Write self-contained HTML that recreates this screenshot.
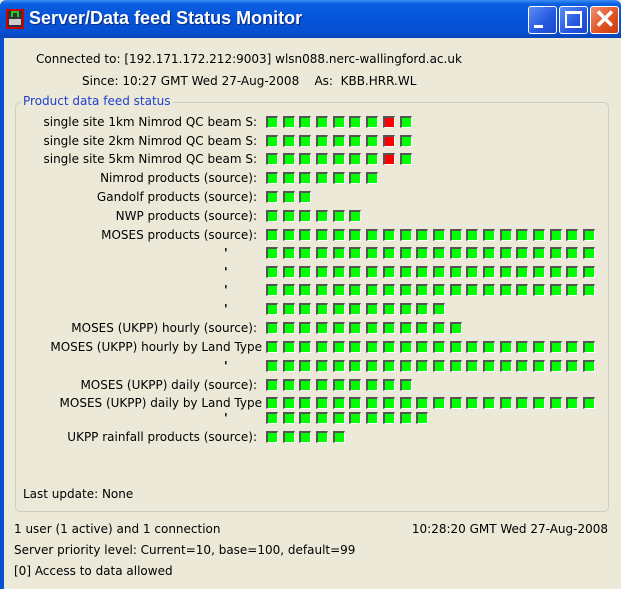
<!DOCTYPE html>
<html><head><style>
*{margin:0;padding:0;box-sizing:border-box}
body{width:621px;height:589px;overflow:hidden;background:#ece9d8;font-family:"DejaVu Sans","Liberation Sans",sans-serif;font-size:12px;color:#000;position:relative}
#tb{position:absolute;left:0;top:0;width:621px;height:38px;background:linear-gradient(#3d8ef5 0,#0a5fe0 4px,#0553d8 50%,#0650d0 85%,#0a44b8 100%);border-radius:6px 6px 0 0}
#lb{position:absolute;left:0;top:38px;width:4px;height:551px;background:#0a4fd0}
.t{position:absolute;white-space:nowrap}
.btn{position:absolute;top:6px;width:29px;height:28px;border:1px solid #fff;border-radius:3px;background:linear-gradient(135deg,#5d8ff5,#2457e0 60%,#1c48cc)}
.row{position:absolute;left:266px;height:12px;display:flex}
.row i{display:block;width:12px;height:12px;margin-right:4.7px;background:#00ff00;border-top:2px solid #555;border-left:2px solid #555;border-right:1px solid #fff;border-bottom:1px solid #fff}
.row i.r{background:#ff0000}
.lab{position:absolute;right:364px;white-space:nowrap;text-align:right}
.q{position:absolute;left:224px;font-weight:bold}
#grp{position:absolute;left:15px;top:102px;width:594px;height:410px;border:1px solid #cfcdbf;border-radius:5px}
</style></head><body>
<div id="tb"></div><div id="lb"></div>
<div style="position:absolute;left:6px;top:9px;width:18px;height:20px;background:#333;border:2px solid #c00"><div style="position:absolute;left:1px;top:8px;width:12px;height:6px;background:#ccc"></div><div style="position:absolute;left:3px;top:0;width:8px;height:6px;border:2px solid #2c2;border-bottom:none"></div></div>
<div class="t" style="left:29px;top:8px;color:#fff;font-family:'Liberation Sans',sans-serif;font-size:18px;font-weight:bold;text-shadow:1px 1px #0a2a80">Server/Data feed Status Monitor</div>
<div class="btn" style="left:528px"><div style="position:absolute;left:5px;top:18px;width:9px;height:3px;background:#fff"></div></div>
<div class="btn" style="left:559px"><div style="position:absolute;left:5px;top:4px;width:17px;height:17px;border:2px solid #fff;border-top-width:3px"></div></div>
<div class="btn" style="left:590px;background:linear-gradient(135deg,#f09070,#e05020 60%,#c83c10)"><div style="position:absolute;left:3px;top:-3px;color:#fff;font-size:26px;font-weight:bold;font-family:'Liberation Sans',sans-serif">✕</div></div>

<div class="t" style="left:36px;top:52px">Connected to: [192.171.172.212:9003] wlsn088.nerc-wallingford.ac.uk</div>
<div class="t" style="left:82px;top:74px">Since: 10:27 GMT Wed 27-Aug-2008 &nbsp;&nbsp; As: &nbsp;KBB.HRR.WL</div>
<div id="grp"></div>
<div class="t" style="left:21px;top:94px;color:#2040d0;background:#ece9d8;padding:0 2px">Product data feed status</div>

<div class="lab" style="top:115px">single site 1km Nimrod QC beam S:</div>
<div class="row" style="top:116px"><i></i><i></i><i></i><i></i><i></i><i></i><i></i><i class="r"></i><i></i></div>
<div class="lab" style="top:134px">single site 2km Nimrod QC beam S:</div>
<div class="row" style="top:135px"><i></i><i></i><i></i><i></i><i></i><i></i><i></i><i class="r"></i><i></i></div>
<div class="lab" style="top:152px">single site 5km Nimrod QC beam S:</div>
<div class="row" style="top:153px"><i></i><i></i><i></i><i></i><i></i><i></i><i></i><i class="r"></i><i></i></div>
<div class="lab" style="top:171px">Nimrod products (source):</div>
<div class="row" style="top:172px"><i></i><i></i><i></i><i></i><i></i><i></i><i></i></div>
<div class="lab" style="top:190px">Gandolf products (source):</div>
<div class="row" style="top:191px"><i></i><i></i><i></i></div>
<div class="lab" style="top:209px">NWP products (source):</div>
<div class="row" style="top:210px"><i></i><i></i><i></i><i></i><i></i><i></i></div>
<div class="lab" style="top:228px">MOSES products (source):</div>
<div class="row" style="top:229px"><i></i><i></i><i></i><i></i><i></i><i></i><i></i><i></i><i></i><i></i><i></i><i></i><i></i><i></i><i></i><i></i><i></i><i></i><i></i><i></i></div>
<div class="q" style="top:246px">'</div>
<div class="row" style="top:247px"><i></i><i></i><i></i><i></i><i></i><i></i><i></i><i></i><i></i><i></i><i></i><i></i><i></i><i></i><i></i><i></i><i></i><i></i><i></i><i></i></div>
<div class="q" style="top:265px">'</div>
<div class="row" style="top:266px"><i></i><i></i><i></i><i></i><i></i><i></i><i></i><i></i><i></i><i></i><i></i><i></i><i></i><i></i><i></i><i></i><i></i><i></i><i></i><i></i></div>
<div class="q" style="top:283px">'</div>
<div class="row" style="top:284px"><i></i><i></i><i></i><i></i><i></i><i></i><i></i><i></i><i></i><i></i><i></i><i></i><i></i><i></i><i></i><i></i><i></i><i></i><i></i><i></i></div>
<div class="q" style="top:302px">'</div>
<div class="row" style="top:303px"><i></i><i></i><i></i><i></i><i></i><i></i><i></i><i></i><i></i><i></i><i></i></div>
<div class="lab" style="top:321px">MOSES (UKPP) hourly (source):</div>
<div class="row" style="top:322px"><i></i><i></i><i></i><i></i><i></i><i></i><i></i><i></i><i></i><i></i><i></i><i></i></div>
<div class="lab" style="top:340px;right:359px">MOSES (UKPP) hourly by Land Type</div>
<div class="row" style="top:341px"><i></i><i></i><i></i><i></i><i></i><i></i><i></i><i></i><i></i><i></i><i></i><i></i><i></i><i></i><i></i><i></i><i></i><i></i><i></i><i></i></div>
<div class="q" style="top:359px">'</div>
<div class="row" style="top:360px"><i></i><i></i><i></i><i></i><i></i><i></i><i></i><i></i><i></i><i></i><i></i><i></i><i></i><i></i><i></i><i></i><i></i><i></i><i></i><i></i></div>
<div class="lab" style="top:378px">MOSES (UKPP) daily (source):</div>
<div class="row" style="top:379px"><i></i><i></i><i></i><i></i><i></i><i></i><i></i><i></i><i></i></div>
<div class="lab" style="top:396px;right:359px">MOSES (UKPP) daily by Land Type</div>
<div class="row" style="top:397px"><i></i><i></i><i></i><i></i><i></i><i></i><i></i><i></i><i></i><i></i><i></i><i></i><i></i><i></i><i></i><i></i><i></i><i></i><i></i><i></i></div>
<div class="q" style="top:411px">'</div>
<div class="row" style="top:412px"><i></i><i></i><i></i><i></i><i></i><i></i><i></i><i></i><i></i><i></i></div>
<div class="lab" style="top:430px">UKPP rainfall products (source):</div>
<div class="row" style="top:431px"><i></i><i></i><i></i><i></i><i></i></div>

<div class="t" style="left:23px;top:487px">Last update: None</div>
<div class="t" style="left:14px;top:522px">1 user (1 active) and 1 connection</div>
<div class="t" style="right:13px;top:522px">10:28:20 GMT Wed 27-Aug-2008</div>
<div class="t" style="left:14px;top:543px">Server priority level: Current=10, base=100, default=99</div>
<div class="t" style="left:14px;top:564px">[0] Access to data allowed</div>
</body></html>
